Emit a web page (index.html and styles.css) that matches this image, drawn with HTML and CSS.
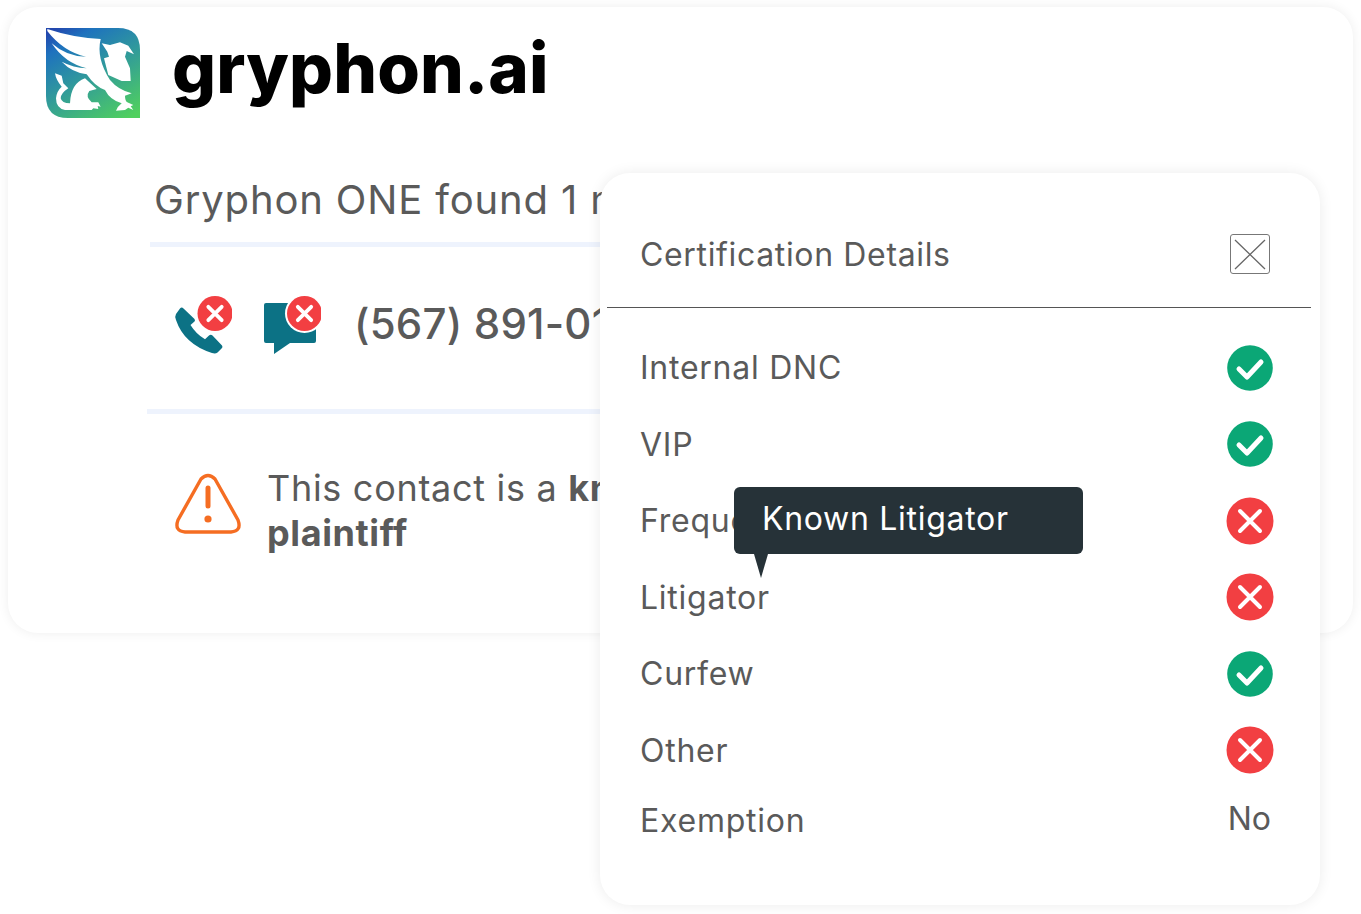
FILE: index.html
```html
<!DOCTYPE html>
<html lang="en">
<head>
<meta charset="utf-8">
<title>Gryphon ONE</title>
<link rel="stylesheet" href="styles.css">
</head>
<body>
<main class="stage">
  <section class="card">
    <header class="brand">
      <svg class="logo" viewBox="0 0 94 90" width="94" height="90">
        <defs>
          <linearGradient id="lg" gradientUnits="userSpaceOnUse" x1="18" y1="-4" x2="76" y2="94">
            <stop offset="0" stop-color="#2348ae"/>
            <stop offset="0.16" stop-color="#1e72be"/>
            <stop offset="0.5" stop-color="#30999c"/>
            <stop offset="1" stop-color="#50d05e"/>
          </linearGradient>
        </defs>
        <path d="M0 0H72Q94 0 94 22V90H22Q0 90 0 68Z" fill="url(#lg)"/>
        <path d="M1.3 1Q27.3 9.7 54.7 11Q50 30.3 64 52Q72.3 62 85.7 65.3L79 67.7Q79 73 81.3 74.3L87.3 77L84.7 78.3L87.3 82L82.3 79.7L79 82L70 82.7Q71.3 78.7 75.7 75.3Q64 72 59 62Q49 58.7 40.7 46.3Q25.7 44.3 15.7 33.7Q27.3 39.7 40.7 40.3Q19 35.3 5.7 15.3Q20.7 28.7 40 28.7Q17.3 23.7 1.3 3Z" fill="#fff"/>
        <path d="M55.7 15.3L64 17L74 14.3L82.3 17.7L88 26.3L80.7 23L79 28.7L84 40.3L84.7 53L75.7 53L62.3 47L58 30.3L63 28.7L61.3 23.7Z" fill="#fff"/>
        <path d="M9 45.3L15.7 47.7L17.3 55.3L22.3 60.3Q14.7 65.3 14.7 70.3Q15.7 75.3 24 75.3Q24.7 55.3 39 50.3L50.7 61L43.3 63Q39 68.7 45.7 74.3L52.3 74.3L54.7 78.7L51.7 78L52.3 81L47.3 80.3L45.7 82L19 82Q10 80.3 10 70.3Q10.7 63 15.7 58.7Q10 52 9 45.3Z" fill="#fff"/>
      </svg>
      <span class="wordmark">gryphon.ai</span>
    </header>

    <h1 class="found">Gryphon ONE found 1 match</h1>

    <div class="number-row">
      <svg class="status-icon" viewBox="0 0 60 60" width="60" height="60">
        <path d="M4 18L8 12.5Q9.7 10.5 11.5 12.5L22.5 23Q23.5 24.5 22.5 25.5L18.5 29Q24 38 33 43.3L37 39.5Q38.7 38 40.5 39.5L50 49.5Q51 51 50 52L45.5 56.5Q43.5 58 40 57Q12 48 4 24Q2.5 20.5 4 18Z" fill="#0c7285"/>
        <circle cx="43" cy="17.5" r="17.5" fill="#f23f42"/>
        <path d="M36.3 10.8L49.7 24.2M49.7 10.8L36.3 24.2" stroke="#fff" stroke-width="3.8" stroke-linecap="round"/>
      </svg>
      <svg class="status-icon msg" viewBox="0 0 60 60" width="60" height="60">
        <path d="M5 7H50Q55 7 55 12V45Q55 47 53 47H29L13 58V47H5Q3 47 3 45V9Q3 7 5 7Z" fill="#0c7285"/>
        <circle cx="43.5" cy="17.5" r="19.5" fill="#fff"/>
        <circle cx="43.5" cy="17.5" r="17.5" fill="#f23f42"/>
        <path d="M36.8 10.8L50.2 24.2M50.2 10.8L36.8 24.2" stroke="#fff" stroke-width="3.8" stroke-linecap="round"/>
      </svg>
      <span class="phone">(567) 891-0123</span>
    </div>

    <div class="warning">
      <svg class="warn-icon" viewBox="0 0 68 62" width="68" height="62">
        <path d="M27 6Q34 -1 41 6L64 47Q68 58 57 59H11Q0 58 4 47Z" fill="none" stroke="#f56d22" stroke-width="3.4" stroke-linejoin="round"/>
        <path d="M34 15V33" stroke="#f56d22" stroke-width="5" stroke-linecap="round"/>
        <circle cx="34" cy="46" r="3.6" fill="#f56d22"/>
      </svg>
      <p class="warn-text">This contact is a <b>known<br>plaintiff</b></p>
    </div>
  </section>

  <aside class="panel">
    <div class="panel-head">
      <h2 class="panel-title">Certification Details</h2>
      <button class="close" aria-label="Close">
        <svg viewBox="0 0 40 40" width="40" height="40"><path d="M5 6L35 35M35 6L5 35" stroke="#666" stroke-width="1.3" fill="none"/></svg>
      </button>
    </div>
    <ul class="cert-list">
      <li class="cert"><span>Internal DNC</span><svg class="mark" viewBox="0 0 48 48"><use href="#ok"/></svg></li>
      <li class="cert"><span>VIP</span><svg class="mark" viewBox="0 0 48 48"><use href="#ok"/></svg></li>
      <li class="cert"><span>Frequent</span><svg class="mark" viewBox="0 0 48 48"><use href="#no"/></svg></li>
      <li class="cert"><span>Litigator</span><svg class="mark" viewBox="0 0 48 48"><use href="#no"/></svg></li>
      <li class="cert"><span>Curfew</span><svg class="mark" viewBox="0 0 48 48"><use href="#ok"/></svg></li>
      <li class="cert"><span>Other</span><svg class="mark" viewBox="0 0 48 48"><use href="#no"/></svg></li>
      <li class="cert last"><span>Exemption</span><span class="value">No</span></li>
    </ul>
    <div class="tooltip">Known Litigator</div>
  </aside>

  <svg class="defs" width="0" height="0" aria-hidden="true">
    <symbol id="ok" viewBox="0 0 48 48">
      <circle cx="24" cy="24" r="22.8" fill="#0ba776"/>
      <path d="M13 25L21 33L35 18" fill="none" stroke="#fff" stroke-width="5" stroke-linecap="round" stroke-linejoin="round"/>
    </symbol>
    <symbol id="no" viewBox="0 0 48 48">
      <circle cx="24" cy="24" r="23.5" fill="#f23f42"/>
      <path d="M14 14L34 34M34 14L14 34" fill="none" stroke="#fff" stroke-width="4" stroke-linecap="round"/>
    </symbol>
  </svg>
</main>
</body>
</html>
```
FILE: styles.css
```css
* { box-sizing: border-box; }
html, body { margin: 0; padding: 0; background: #fff; }
body { font-family: Inter, "Noto Sans", sans-serif; color: #5a5a5a; width: 1361px; height: 914px; overflow: hidden; }
.stage { position: relative; width: 1361px; height: 914px; padding: 7px 8px 0; }

.card {
  width: 1345px; height: 626px; background: #fff; border-radius: 30px;
  box-shadow: 0 0 12px rgba(0,0,0,.07);
  padding: 21px 0 0 38px;
}
.brand { display: flex; align-items: center; gap: 32px; height: 90px; }
.logo { flex: none; }
.wordmark { font-family: Inter, sans-serif; font-weight: 800; font-size: 69px; line-height: 90px; color: #000; letter-spacing: .1px; margin-top: -10px; }

.found { margin: 56px 0 0 104px; padding-left: 4px; width: 450px; height: 73px; border-bottom: 5px solid #eef3fd; font-weight: 400; font-size: 40px; line-height: 52px; color: #5a5a5a; white-space: nowrap; letter-spacing: .85px; }
.number-row { display: flex; align-items: flex-start; margin: 0 0 0 101px; width: 460px; height: 167px; border-bottom: 5px solid #eef3fd; padding: 49px 0 0 25px; }
.status-icon { flex: none; }
.msg { margin-left: 29px; }
.phone { margin-left: 33px; font-size: 42px; line-height: 56px; font-weight: 500; color: #5a5a5a; white-space: nowrap; letter-spacing: .2px; }
.warning { display: flex; gap: 25px; margin: 52px 0 0 128px; }
.warn-icon { flex: none; margin-top: 7px; }
.warn-text { margin: 0; font-size: 36px; line-height: 45px; color: #5a5a5a; white-space: nowrap; letter-spacing: .7px; }
.warn-text b { font-weight: 700; letter-spacing: .6px; }

.panel {
  position: absolute; left: 600px; top: 173px; width: 720px; height: 732px;
  background: #fff; border-radius: 30px; box-shadow: 0 0 14px rgba(0,0,0,.08);
  padding: 0 9px 0 7px;
}
.panel-head { display: flex; justify-content: space-between; align-items: center; height: 135px; border-bottom: 1px solid #555; padding: 28px 41px 0 33px; }
.panel-title { margin: 0; font-size: 32px; font-weight: 400; color: #5a5a5a; letter-spacing: .65px; }
.close { width: 40px; height: 40px; padding: 0; background: none; border: 1px solid #777; border-radius: 3px; display: block; }
.close svg { display: block; margin: -1px; }

.cert-list { list-style: none; margin: 0; padding: 21.5px 37px 0 33px; }
.cert { display: flex; justify-content: space-between; align-items: center; height: 76.5px; font-size: 32px; color: #5a5a5a; letter-spacing: .75px; }
.last { height: 63px; }
.mark { width: 48px; height: 48px; }
.value { margin-right: 3px; position: relative; top: -2px; letter-spacing: 0; }

.tooltip {
  position: absolute; left: 134px; top: 314px; width: 349px; height: 67px;
  background: #263238; color: #fff; border-radius: 6px; font-size: 32px; padding: 12px 0 0 28px; letter-spacing: .7px;
}
.tooltip::after {
  content: ""; position: absolute; left: 20px; top: 67px;
  border-style: solid; border-width: 24px 7px 0; border-color: #263238 transparent transparent;
}
.defs { position: absolute; }
```
